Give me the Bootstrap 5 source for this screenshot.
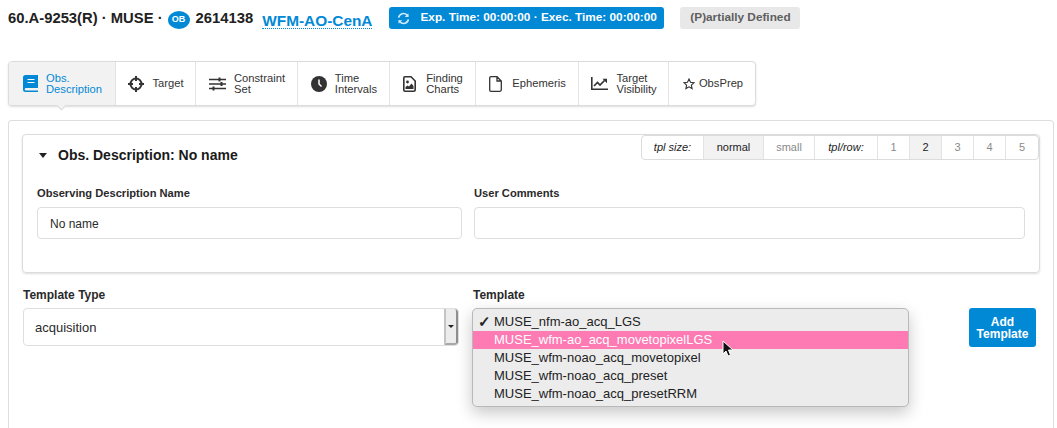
<!DOCTYPE html>
<html lang="en">
<head>
<meta charset="utf-8">
<title>OB 2614138</title>
<link href="https://cdn.jsdelivr.net/npm/bootstrap@5.3.0/dist/css/bootstrap.min.css" rel="stylesheet">
<style>
html,body{height:428px;overflow:hidden}
body{font-family:"Liberation Sans",Arial,sans-serif;color:#212121;background:#fff;font-size:12px;padding:0 3px 0 8px}
.ob-head{height:30px;font-size:14.800px;font-weight:700;color:#212121;padding-bottom:1px}
.ob-pill{width:22px;height:18px;background:#0289d6;color:#fff;border-radius:50%;font-size:9px;margin:2px 6px 0 5px}
.ob-link{color:#0289d6;text-decoration:none;border-bottom:1px dotted #0289d6;line-height:15px;margin-left:9px;margin-top:2px;font-size:15.400px}
.ob-time{background:#0289d6;color:#fff;font-size:11.800px;border-radius:3px;height:22px;margin-left:17px;width:275px;padding-left:8px;gap:10px}
.ob-state{background:#e8e8e8;color:#5e5e5e;font-size:11.800px;border-radius:3px;height:22px;margin-left:16px;width:120px}
.tabs-bar{margin-top:31px;width:748px;height:45px;border:1px solid #dcdcdc;border-radius:4px;box-shadow:0 1px 2px rgba(34,36,38,.15);background:#fff}
.tab-item{font-size:11.200px;line-height:11px;color:#333;gap:8px;padding-left:1px;border-right:1px solid #e3e3e3;height:100%}
.tab-item:last-child{border-right:0}
.tab-on{background:#f2f2f2;color:#0289d6;border-radius:3px 0 0 3px;position:relative}
.tab-on::after{content:"";position:absolute;left:50%;bottom:-4px;width:7px;height:7px;margin-left:-4px;background:#f2f2f2;border-right:1px solid #dcdcdc;border-bottom:1px solid #dcdcdc;transform:rotate(45deg)}
.ic-narrow{margin-right:2px}
.w1{width:107px}.w2{width:80px}.w3{width:102px}.w4{width:92px}.w5{width:86px}.w6{width:103px}.w7{width:90px}.w8{flex:1;padding-left:2px}
.outer-seg{margin-top:14px;height:308px;width:1046px;border:1px solid #dedede;border-bottom:0;border-radius:4px 4px 0 0;padding:13px}
.inner-seg{position:relative;width:1018px;height:139px;border:1px solid #dcdcdc;border-radius:4px;box-shadow:0 1px 2px rgba(34,36,38,.15);padding:14px}
.inner-title{font-size:14px;font-weight:700;color:#1a1a1a;line-height:17px;margin-top:-2px;padding-left:2px;gap:11px}
.size-bar{position:absolute;top:0;right:0;height:25px;border:1px solid #dcdcdc;border-radius:4px;background:#fff;font-size:11px;color:#8a8a8a}
.size-bar>div{height:100%;border-right:1px solid #e3e3e3}
.size-bar>div:last-child{border-right:0}
.sz-lab{font-style:italic;color:#222}
.sz-on{background:#f2f2f2;color:#222}
.s1{width:62px}.s2{width:60px}.s3{width:51px}.s4{width:63px}.s5{width:32px}
.fld-label{font-size:11.150px;font-weight:700;color:#2a2a2a;line-height:13px;margin-bottom:7px}
.fld-box{height:32px;border:1px solid #dedede;border-radius:4px;font-size:12px;padding:2px 12px 0;color:#2a2a2a;background:#fff}
.fld-row{margin-top:23px;gap:12px}
.c-a{width:425px}.c-b{width:551px}
.tpl-row{margin-top:15px;margin-left:1px;position:relative}
.tpl-label{font-size:12px;font-weight:700;color:#2a2a2a;line-height:14px;margin-bottom:6px}
.type-box{width:436px;height:38px;border:1px solid #dedede;border-radius:4px;font-size:13px;padding-left:11px;color:#2a2a2a;overflow:hidden}
.type-text{padding-top:2px}
.spin-btn{width:14px;height:100%;background:#ececec;border-left:2px solid #c4c4c4;border-right:2px solid #8f8f8f;border-bottom:2px solid #a8a8a8;border-radius:0 3px 3px 0}
.spin-arrow{width:0;height:0;border-left:3px solid transparent;border-right:3px solid transparent;border-top:3px solid #222}
.ob-caret{border-left-width:4.500px;border-right-width:4.500px;border-top-width:5px}
.add-tpl{position:absolute;left:946px;top:20px;width:67px;height:39px;background:#0289d6;color:#fff;font-size:12px;line-height:12px;font-weight:700;border-radius:3px;border:0;padding:0}
.tpl-col{margin-left:14px}
.pop-menu{position:absolute;left:449px;top:20px;width:437px;height:99px;background:#ececec;border:1px solid #b9b9b9;border-radius:5px;box-shadow:0 6px 16px rgba(0,0,0,.22);padding-top:4px;font-size:13px;color:#222;z-index:5}
.pop-item{height:18px;line-height:18px;padding-left:21px;position:relative}
.pop-sel{background:#fd7ab3;color:#fff}
.pop-check{position:absolute;left:5px;top:0;font-size:15px;font-weight:700}
.mouse-ptr{position:absolute;left:249px;top:31px;z-index:6}
</style>
</head>
<body>
<div class="ob-head d-flex align-items-end">
  <span>60.A-9253(R) · MUSE ·</span>
  <span class="ob-pill d-flex align-items-center justify-content-center">OB</span>
  <span>2614138</span>
  <a href="#" class="ob-link">WFM-AO-CenA</a>
  <div class="ob-time d-flex align-items-center fw-bold">
    <svg width="13" height="13" viewBox="0 0 16 16" fill="none" stroke="#cfe9f8" stroke-width="2"><path d="M2 7a6 6 0 0 1 10.500-3L14 5.500"/><path d="M14 1.500V6H9.500" fill="#cfe9f8" stroke="none"/><path d="M14 9a6 6 0 0 1-10.500 3L2 10.500"/><path d="M2 14.500V10h4.500" fill="#cfe9f8" stroke="none"/></svg>
    <span>Exp. Time: 00:00:00 · Exec. Time: 00:00:00</span>
  </div>
  <div class="ob-state d-flex align-items-center justify-content-center fw-bold">(P)artially Defined</div>
</div>

<div class="tabs-bar d-flex">
  <div class="tab-item tab-on w1 d-flex align-items-center justify-content-center">
    <svg width="15" height="17" viewBox="0 0 15 17"><path fill="#0289d6" d="M2.500 0H15v13H3a1.300 1.300 0 0 0 0 2.600h12V17H2.500A2.500 2.500 0 0 1 0 14.500v-12A2.500 2.500 0 0 1 2.500 0z"/><path stroke="#fff" stroke-width="1.200" d="M4.500 4.500h7M4.500 7.500h7"/></svg>
    <span>Obs.<br>Description</span>
  </div>
  <div class="tab-item w2 d-flex align-items-center justify-content-center">
    <svg width="16" height="16" viewBox="0 0 16 16" fill="none" stroke="#333" stroke-width="2"><circle cx="8" cy="8" r="5.500"/><path d="M8 0v5M8 11v5M0 8h5M11 8h5"/></svg>
    <span>Target</span>
  </div>
  <div class="tab-item w3 d-flex align-items-center justify-content-center">
    <svg width="17" height="14" viewBox="0 0 17 14"><path stroke="#333" stroke-width="1.300" d="M0 2.500h17M0 7h17M0 11.500h17"/><path fill="#333" d="M9.500 .5h2v4h-2zM11.500 5h2v4h-2zM3.500 9.500h2v4h-2z"/></svg>
    <span>Constraint<br>Set</span>
  </div>
  <div class="tab-item w4 d-flex align-items-center justify-content-center">
    <svg width="16" height="16" viewBox="0 0 16 16"><circle cx="8" cy="8" r="8" fill="#333"/><path d="M8 3.500V8l2.500 2.500" fill="none" stroke="#fff" stroke-width="1.500"/></svg>
    <span>Time<br>Intervals</span>
  </div>
  <div class="tab-item w5 d-flex align-items-center justify-content-center">
    <svg class="ic-narrow" width="13" height="16" viewBox="0 0 13 16"><path fill="none" stroke="#333" stroke-width="1.600" d="M2 .8h6l4.200 4.200v8.500a1.700 1.700 0 0 1-1.700 1.700H2a1.200 1.200 0 0 1-1.200-1.200V2A1.200 1.200 0 0 1 2 .8z"/><circle cx="4.500" cy="6" r="1.400" fill="#333"/><path fill="#333" d="M2.500 13v-2l2-1.500 1.500 1 2.500-3L10.500 10v3z"/></svg>
    <span>Finding<br>Charts</span>
  </div>
  <div class="tab-item w6 d-flex align-items-center justify-content-center">
    <svg class="ic-narrow" width="13" height="16" viewBox="0 0 13 16"><path fill="none" stroke="#333" stroke-width="1.300" d="M2 .7h6l4.300 4.300v8.800a1.500 1.500 0 0 1-1.500 1.500H2A1.300 1.300 0 0 1 .7 14V2A1.300 1.300 0 0 1 2 .7zM8 .7V5h4.300"/></svg>
    <span>Ephemeris</span>
  </div>
  <div class="tab-item w7 d-flex align-items-center justify-content-center">
    <svg width="17" height="13" viewBox="0 0 17 13"><path fill="none" stroke="#333" stroke-width="1.600" d="M.8 0v12.200H17"/><path fill="none" stroke="#333" stroke-width="1.700" d="M3 9l3.500-3.500L9 8l4.500-4.500"/><path fill="#333" d="M11.500 1.800H16v4.500z"/></svg>
    <span>Target<br>Visibility</span>
  </div>
  <div class="tab-item w8 d-flex align-items-center justify-content-center gap-1">
    <svg width="12" height="12" viewBox="0 0 24 24" fill="none" stroke="#333" stroke-width="2.200"><path d="M12 2l3 6.600 7 .8-5.200 4.800 1.400 7L12 17.600 5.800 21.200l1.400-7L2 9.400l7-.8z"/></svg>
    <span>ObsPrep</span>
  </div>
</div>

<div class="outer-seg">
  <div class="inner-seg">
    <div class="size-bar d-flex">
      <div class="s1 sz-lab d-flex align-items-center justify-content-center">tpl size:</div>
      <div class="s2 sz-on d-flex align-items-center justify-content-center">normal</div>
      <div class="s3 d-flex align-items-center justify-content-center">small</div>
      <div class="s4 sz-lab d-flex align-items-center justify-content-center">tpl/row:</div>
      <div class="s5 d-flex align-items-center justify-content-center">1</div>
      <div class="s5 sz-on d-flex align-items-center justify-content-center">2</div>
      <div class="s5 d-flex align-items-center justify-content-center">3</div>
      <div class="s5 d-flex align-items-center justify-content-center">4</div>
      <div class="s5 d-flex align-items-center justify-content-center">5</div>
    </div>
    <div class="inner-title d-flex align-items-center">
      <span class="spin-arrow ob-caret"></span>
      <span>Obs. Description: No name</span>
    </div>
    <div class="fld-row d-flex">
      <div class="c-a">
        <div class="fld-label">Observing Description Name</div>
        <div class="fld-box d-flex align-items-center">No name</div>
      </div>
      <div class="c-b">
        <div class="fld-label">User Comments</div>
        <div class="fld-box"></div>
      </div>
    </div>
  </div>
  <div class="tpl-row d-flex">
    <div>
      <div class="tpl-label">Template Type</div>
      <div class="type-box d-flex align-items-center justify-content-between">
        <span class="type-text">acquisition</span>
        <span class="spin-btn d-flex align-items-center justify-content-center"><span class="spin-arrow"></span></span>
      </div>
    </div>
    <div class="tpl-col">
      <div class="tpl-label">Template</div>
    </div>
    <div class="pop-menu">
      <div class="pop-item"><span class="pop-check">✓</span>MUSE_nfm-ao_acq_LGS</div>
      <div class="pop-item pop-sel">MUSE_wfm-ao_acq_movetopixelLGS</div>
      <div class="pop-item">MUSE_wfm-noao_acq_movetopixel</div>
      <div class="pop-item">MUSE_wfm-noao_acq_preset</div>
      <div class="pop-item">MUSE_wfm-noao_acq_presetRRM</div>
      <svg class="mouse-ptr" width="12" height="18" viewBox="0 0 12 18"><path fill="#111" stroke="#fff" stroke-width="1" d="M1 1v13l3-3 2 5 2.500-1-2-5H11z"/></svg>
    </div>
    <button type="button" class="add-tpl btn">Add<br>Template</button>
  </div>
</div>
<script src="https://cdn.jsdelivr.net/npm/bootstrap@5.3.0/dist/js/bootstrap.bundle.min.js"></script>
</body>
</html>
